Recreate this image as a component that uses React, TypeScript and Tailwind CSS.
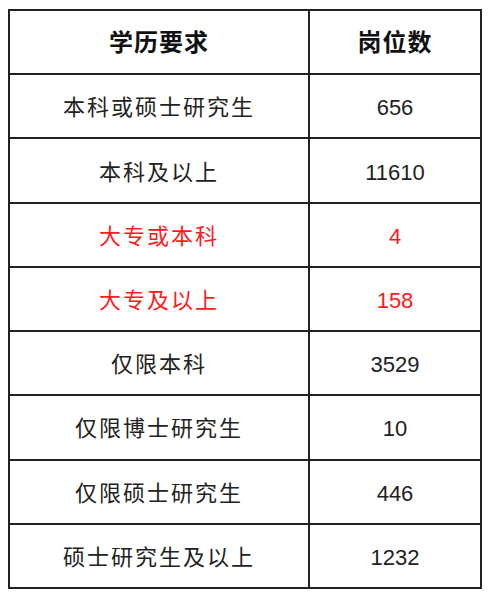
const ROWS = [
  { edu: '本科或硕士研究生', count: '656' },
  { edu: '本科及以上', count: '11610' },
  { edu: '大专或本科', count: '4', red: true },
  { edu: '大专及以上', count: '158', red: true },
  { edu: '仅限本科', count: '3529' },
  { edu: '仅限博士研究生', count: '10' },
  { edu: '仅限硕士研究生', count: '446' },
  { edu: '硕士研究生及以上', count: '1232' },
]

export default function App() {
  return (
    <div
      className="w-[490px] h-[596px] bg-white pt-[9px] pl-[8px]"
      style={{ fontFamily: '"Liberation Sans", "Noto Sans CJK SC", sans-serif' }}
    >
      <div className="w-[474px] h-[580px] border-2 border-[#222] flex flex-col">
        {/* Header */}
        <div className="flex-1 flex border-b-2 border-[#222]">
          <div className="w-[300px] border-r-2 border-[#222] flex items-center justify-center pt-[2px] text-[24px] font-bold text-[#111] tracking-[1px]">
            学历要求
          </div>
          <div className="flex-1 flex items-center justify-center pt-[2px] text-[24px] font-bold text-[#111] tracking-[1px]">
            岗位数
          </div>
        </div>

        {ROWS.map((row, i) => (
          <div
            key={row.edu}
            className={`flex-1 flex ${i < ROWS.length - 1 ? 'border-b-2 border-[#222]' : ''}`}
          >
            <div
              className={`w-[300px] border-r-2 border-[#222] flex items-center justify-center pt-[3px] text-[22px] tracking-[2px] ${
                row.red ? 'text-[#ff1a1a]' : 'text-[#222]'
              }`}
            >
              {row.edu}
            </div>
            <div
              className={`flex-1 flex items-center justify-center pt-[3px] text-[22px] ${
                row.red ? 'text-[#ff1a1a]' : 'text-[#222]'
              }`}
            >
              {row.count}
            </div>
          </div>
        ))}
      </div>
    </div>
  )
}
